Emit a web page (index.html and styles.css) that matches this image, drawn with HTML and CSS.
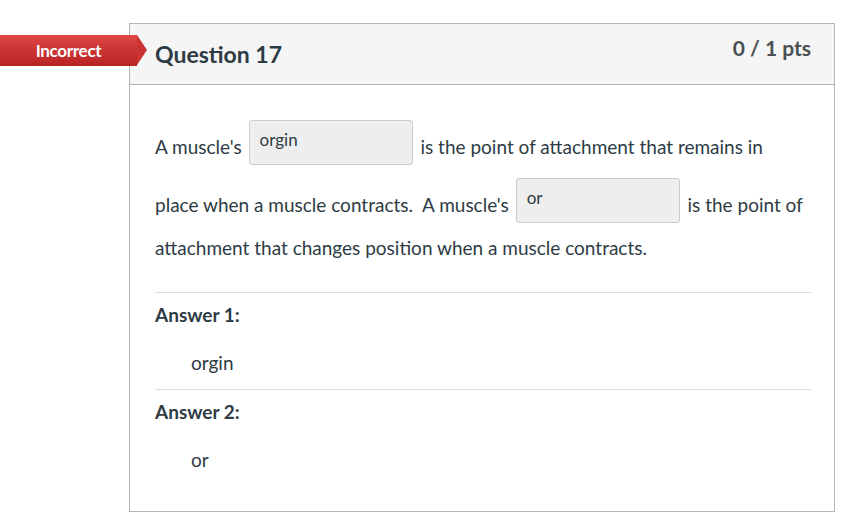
FILE: index.html
```html
<!DOCTYPE html>
<html>
<head>
<meta charset="utf-8">
<link rel="stylesheet" href="styles.css">
</head>
<body>
<div class="page">
  <div class="flag">Incorrect</div>
  <div class="card">
    <div class="card-header">
      <h2 class="q-title">Question 17</h2>
      <div class="q-pts">0 / 1 pts</div>
    </div>
    <div class="card-body">
      <p class="q-text">A muscle's <span class="blank">orgin</span> is the point of attachment that remains in place when a muscle contracts.&nbsp; A muscle's <span class="blank">or</span> is the point of attachment that changes position when a muscle contracts.</p>
      <div class="answer">
        <div class="answer-label">Answer 1:</div>
        <div class="answer-value">orgin</div>
      </div>
      <div class="answer">
        <div class="answer-label">Answer 2:</div>
        <div class="answer-value">or</div>
      </div>
    </div>
  </div>
</div>
</body>
</html>
```
FILE: styles.css
```css
* { box-sizing: border-box; }
html, body { margin: 0; padding: 0; background: #fff; }
body {
  font-family: Lato, "Open Sans", "Liberation Sans", sans-serif;
  color: #2d3b45;
}
.page {
  position: relative;
  padding: 23px 0 0 129px;
  width: 847px;
  height: 526px;
}
.flag {
  position: absolute;
  left: 0;
  top: 35px;
  width: 137px;
  height: 31px;
  background: linear-gradient(#e04646, #b82323);
  color: #fff;
  font-weight: 700;
  font-size: 17px;
  line-height: 31px;
  text-align: center;
  letter-spacing: -0.3px;
  z-index: 2;
}
.flag::after {
  content: "";
  position: absolute;
  left: 137px;
  top: 0;
  border-top: 15.5px solid transparent;
  border-bottom: 15.5px solid transparent;
  border-left: 10px solid #cb3333;
}
.card {
  width: 706px;
  height: 489px;
  border: 1px solid #b5b5b5;
}
.card-header {
  height: 61px;
  background: #f5f5f5;
  border-bottom: 1px solid #b5b5b5;
  display: flex;
  justify-content: space-between;
  padding: 0 23px 0 25px;
}
.q-title {
  margin: 0;
  font-size: 23px;
  font-weight: 700;
  line-height: 30px;
  padding-top: 15px;
}
.q-pts {
  font-size: 21px;
  font-weight: 700;
  line-height: 26px;
  padding-top: 11px;
  color: #4a4f52;
}
.card-body {
  padding: 29px 23px 0 25px;
}
.q-text {
  margin: 0 0 27px;
  font-size: 19px;
  line-height: 35px;
}
.blank {
  display: inline-block;
  overflow: hidden;
  vertical-align: -18px;
  width: 164px;
  height: 45px;
  margin: 6px 3px 7px 2px;
  padding: 4px 10px 0;
  background: #eeeeee;
  border: 1px solid #cccccc;
  border-radius: 3px;
  font-size: 17px;
  line-height: 30px;
  color: #2d3b45;
}
.answer {
  border-top: 1px solid #dddddd;
  padding: 10px 0 14px;
}
.answer-label {
  font-size: 19px;
  font-weight: 700;
  line-height: 24px;
}
.answer-value {
  margin-top: 24px;
  padding-left: 36px;
  font-size: 19px;
  line-height: 24px;
}
```
